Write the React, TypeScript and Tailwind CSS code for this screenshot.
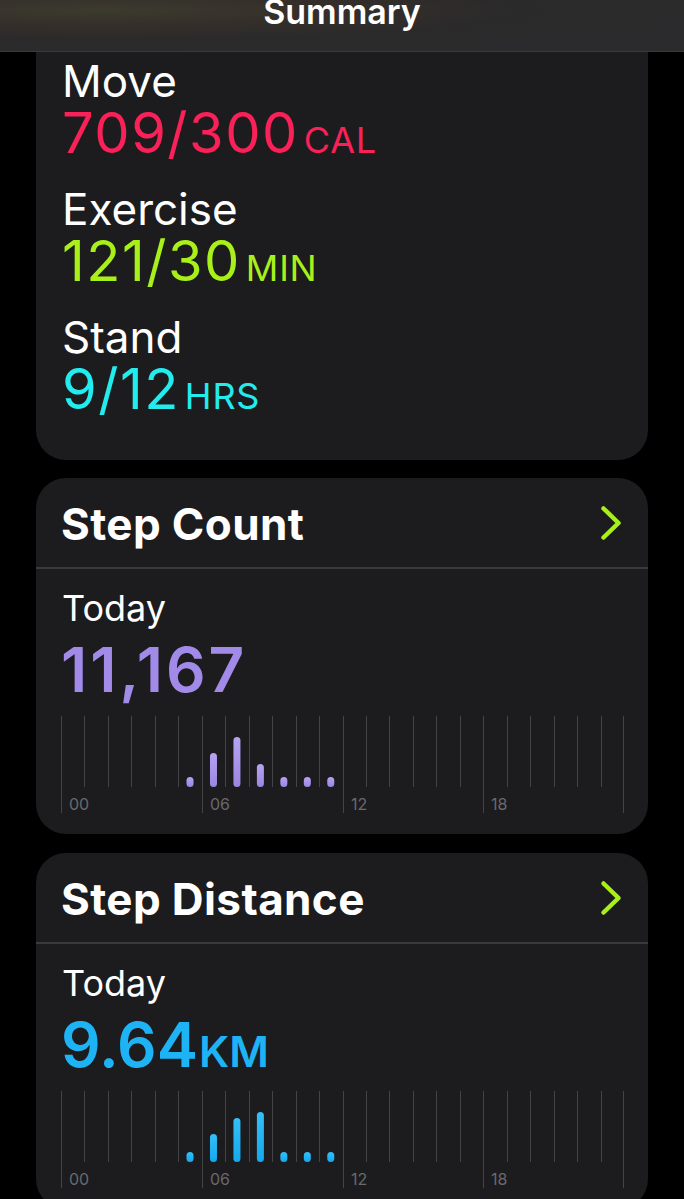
import React from "react";

type Bar = { hour: number; h: number };

const stepBars: Bar[] = [
  { hour: 5, h: 10 },
  { hour: 6, h: 34 },
  { hour: 7, h: 50 },
  { hour: 8, h: 23 },
  { hour: 9, h: 10 },
  { hour: 10, h: 10 },
  { hour: 11, h: 10 },
];

const distBars: Bar[] = [
  { hour: 5, h: 10 },
  { hour: 6, h: 28 },
  { hour: 7, h: 44 },
  { hour: 8, h: 50 },
  { hour: 9, h: 10 },
  { hour: 10, h: 10 },
  { hour: 11, h: 10 },
];

const Chevron = () => (
  <svg width="22" height="36" viewBox="0 0 22 36" fill="none">
    <polyline
      points="3.5,3.5 18.5,18 3.5,32.5"
      stroke="#a9f01b"
      strokeWidth="4.5"
      strokeLinecap="round"
      strokeLinejoin="round"
    />
  </svg>
);

const DayChart = ({ bars, id, top, bottom }: { bars: Bar[]; id: string; top: string; bottom: string }) => {
  const w = 563;
  const col = w / 24;
  return (
    <svg width={w} height="97" viewBox={`0 0 ${w} 97`} className="block overflow-visible">
      <defs>
        <linearGradient id={id} x1="0" y1="0" x2="0" y2="1">
          <stop offset="0" stopColor={top} />
          <stop offset="1" stopColor={bottom} />
        </linearGradient>
      </defs>
      {Array.from({ length: 25 }).map((_, i) => {
        const x = Math.min(Math.round(i * col) + 0.5, w - 0.5);
        return (
          <line
            key={i}
            x1={x}
            x2={x}
            y1="0"
            y2={i % 6 === 0 ? 97 : 71}
            stroke="#444446"
            strokeWidth="1"
          />
        );
      })}
      {["00", "06", "12", "18"].map((t, i) => (
        <text
          key={t}
          x={Math.round(i * 6 * col) + 8}
          y="94"
          fill="#69696e"
          fontSize="16"
          fontFamily="Inter, sans-serif"
        >
          {t}
        </text>
      ))}
      {bars.map((b) => (
        <rect
          key={b.hour}
          x={(b.hour + 0.5) * col - 3.5}
          y={71 - b.h}
          width="7"
          height={b.h}
          rx="3.5"
          fill={`url(#${id})`}
        />
      ))}
    </svg>
  );
};

const StatCard = ({
  title,
  value,
  unit,
  color,
  bars,
  id,
  top,
  bottom,
  valueClass,
  className,
}: {
  title: string;
  value: string;
  unit?: string;
  color: string;
  bars: Bar[];
  id: string;
  top: string;
  bottom: string;
  valueClass: string;
  className?: string;
}) => (
  <div className={`rounded-[30px] bg-[#1c1c1e] ${className ?? ""}`}>
    {/* header */}
    <div className="h-[91px] flex items-center justify-between pl-[25px] pr-[26px] border-b-2 border-[#3a3a3c]">
      <h2 className="text-[44px] font-bold text-white tracking-[0.4px] pt-[2px]">{title}</h2>
      <Chevron />
    </div>
    {/* body */}
    <div className="pt-[19px] pb-[21px]">
      <div className="pl-[26px] text-[36px] leading-[40px] text-white">Today</div>
      <div className="mt-[11px] pl-[25px] flex items-baseline gap-[1px]" style={{ color }}>
        <span className={`text-[62px] leading-[62px] font-semibold ${valueClass}`}>{value}</span>
        {unit && <span className="text-[43px] leading-none font-semibold">{unit}</span>}
      </div>
      <div className="mt-[15px] ml-[25px]">
        <DayChart bars={bars} id={id} top={top} bottom={bottom} />
      </div>
    </div>
  </div>
);

const Ring = ({ label, value, unit, color }: { label: string; value: string; unit: string; color: string }) => (
  <div>
    <div className="text-[44px] leading-[48px] text-white">{label}</div>
    <div className="flex items-baseline gap-[5px]" style={{ color }}>
      <span className="text-[56px] leading-[56px] tracking-[1.5px]">{value}</span>
      <span className="text-[36px] leading-none tracking-[0.8px]">{unit}</span>
    </div>
  </div>
);

export default function App() {
  return (
    <div className="min-h-screen bg-black font-['Inter','Noto_Sans',sans-serif] overflow-hidden">
      {/* nav bar */}
      <div className="h-[52px] border-b border-[#3a3a3a] bg-[radial-gradient(ellipse_at_15%_20%,#3c3b2e_0%,#352f2a_25%,#2b2a2b_50%,#2b2b2d_100%)] flex justify-center overflow-hidden">
        <span className="-mt-[5px] text-[34px] leading-[34px] font-semibold text-white">Summary</span>
      </div>

      <div className="px-9">
        {/* activity card */}
        <div className="rounded-b-[30px] bg-[#1c1c1e] pt-[5px] pb-[43px] pl-[26px] flex flex-col gap-6">
          <Ring label="Move" value="709/300" unit="CAL" color="#fa2058" />
          <Ring label="Exercise" value="121/30" unit="MIN" color="#a9f01b" />
          <Ring label="Stand" value="9/12" unit="HRS" color="#22ecee" />
        </div>

        <StatCard
          className="mt-[18px]"
          title="Step Count"
          value="11,167"
          valueClass="tracking-[3px]"
          color="#a28be8"
          bars={stepBars}
          id="steps"
          top="#b6a4f2"
          bottom="#9c85e2"
        />

        <StatCard
          className="mt-[19px]"
          title="Step Distance"
          value="9.64"
          valueClass="tracking-[0px]"
          unit="KM"
          color="#1db3f5"
          bars={distBars}
          id="dist"
          top="#34c0f8"
          bottom="#14a8ee"
        />
      </div>
    </div>
  );
}
